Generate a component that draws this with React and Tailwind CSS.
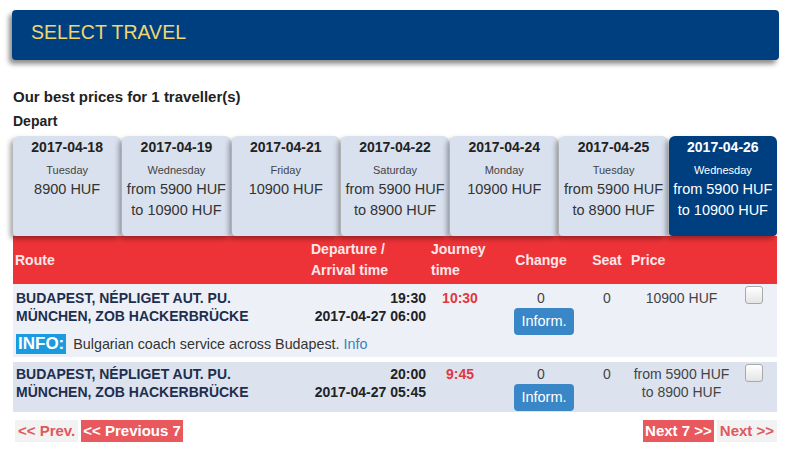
import React from 'react'

const days = [
  { date: '2017-04-18', day: 'Tuesday', price: ['8900 HUF'] },
  { date: '2017-04-19', day: 'Wednesday', price: ['from 5900 HUF', 'to 10900 HUF'] },
  { date: '2017-04-21', day: 'Friday', price: ['10900 HUF'] },
  { date: '2017-04-22', day: 'Saturday', price: ['from 5900 HUF', 'to 8900 HUF'] },
  { date: '2017-04-24', day: 'Monday', price: ['10900 HUF'] },
  { date: '2017-04-25', day: 'Tuesday', price: ['from 5900 HUF', 'to 8900 HUF'] },
  { date: '2017-04-26', day: 'Wednesday', price: ['from 5900 HUF', 'to 10900 HUF'], active: true },
]

const trips = [
  {
    dep: '19:30',
    arr: '2017-04-27 06:00',
    journey: '10:30',
    price: ['10900 HUF'],
    info: true,
    bg: 'bg-[#edf1f7]',
  },
  {
    dep: '20:00',
    arr: '2017-04-27 05:45',
    journey: '9:45',
    price: ['from 5900 HUF', 'to 8900 HUF'],
    bg: 'bg-[#dce3ee]',
  },
]

const cols = 'grid grid-cols-[292px_123px_68px_90px_42px_107px_42px]'

function Checkbox() {
  return (
    <div className="w-[18px] h-[18px] rounded-[3px] border border-[#a9a9a9] bg-gradient-to-b from-white to-[#e4e4e4]" />
  )
}

export default function App() {
  return (
    <div className="min-h-screen bg-white pl-[12px] pt-[10px] text-[#222] font-['Liberation_Sans',Arial,sans-serif]">
      {/* Header */}
      <div className="w-[767px] h-[50px] bg-[#003f7f] rounded-[4px] shadow-[-3px_4px_5px_rgba(0,0,0,0.45)] flex items-center pl-[19px] pb-[5px]">
        <h1 className="text-[19.5px] text-[#f2d66f] leading-none">SELECT TRAVEL</h1>
      </div>

      <div className="ml-[1px] w-[764px]">
        <p className="mt-[28px] text-[15px] font-bold leading-[18px]">Our best prices for 1 traveller(s)</p>
        <p className="mt-[6px] text-[14px] font-bold leading-[18px]">Depart</p>

        {/* Date tabs */}
        <div className="mt-[6px] grid grid-cols-7 gap-[1px]">
          {days.map((d) => (
            <div
              key={d.date}
              className={`h-[100px] rounded-t-[6px] rounded-b-[4px] flex flex-col items-center pt-[2px] shadow-[-3px_3px_5px_rgba(0,0,0,0.35)] ${
                d.active ? 'bg-[#003f7f] text-white' : 'bg-[#d9e1ee] text-[#333]'
              }`}
            >
              <div className={`text-[14px] font-bold leading-[18px] ${d.active ? 'text-white' : 'text-[#222]'}`}>
                {d.date}
              </div>
              <div className={`mt-[7px] mb-[2px] text-[11px] leading-[14px] ${d.active ? 'text-white' : 'text-[#444]'}`}>{d.day}</div>
              {d.price.map((p) => (
                <div key={p} className="text-[14.5px] leading-[21px] whitespace-nowrap">
                  {p}
                </div>
              ))}
            </div>
          ))}
        </div>

        {/* Table header */}
        <div className={`${cols} h-[48px] bg-[#ee3338] text-[#fde8e8] text-[14px] font-bold leading-[21px] items-center`}>
          <div className="pl-[2px]">Route</div>
          <div className="pl-[6px]">
            Departure /<br />
            Arrival time
          </div>
          <div className="pl-[3px]">
            Journey
            <br />
            time
          </div>
          <div className="text-center">Change</div>
          <div className="text-center">Seat</div>
          <div className="pl-[3px]">Price</div>
          <div />
        </div>

        {/* Rows */}
        {trips.map((t, i) => (
          <div key={i} className={`${t.bg} ${i > 0 ? 'mt-[5px]' : ''}`}>
            <div className={`${cols} h-[50px] ${i === 0 ? 'pt-[5px]' : 'pt-[3px]'} text-[14px] leading-[18px]`}>
              <div className="pl-[3px] font-bold text-[#1e2e4e]">
                BUDAPEST, NÉPLIGET AUT. PU.
                <br />
                MÜNCHEN, ZOB HACKERBRÜCKE
              </div>
              <div className="pr-[2px] text-right font-bold text-[#222]">
                {t.dep}
                <br />
                {t.arr}
              </div>
              <div className="text-center pr-[4px] font-bold text-[#e0383e]">{t.journey}</div>
              <div className="flex flex-col items-center text-[#444]">
                <div>0</div>
                <button className="mt-[1px] ml-[6px] h-[27px] px-[7px] rounded-[4px] bg-[#3a87c8] text-white text-[14.5px] leading-[27px]">
                  Inform.
                </button>
              </div>
              <div className="text-center text-[#444]">0</div>
              <div className="text-center text-[#444]">
                {t.price.map((p) => (
                  <div key={p}>{p}</div>
                ))}
              </div>
              <div className={`pl-[10px] ${i === 0 ? '-mt-[3px]' : '-mt-[1px]'}`}>
                <Checkbox />
              </div>
            </div>
            {t.info && (
              <div className="h-[23px] pl-[3px] flex items-start text-[14px]">
                <span className="bg-[#1a9be0] text-white font-bold text-[17px] leading-[20px] px-[2px]">INFO:</span>
                <span className="ml-[7px] leading-[20px] text-[14.3px] text-[#333]">
                  Bulgarian coach service across Budapest. <span className="text-[#3c7ebf]">Info</span>
                </span>
              </div>
            )}
          </div>
        ))}

        {/* Pagination */}
        <div className="mt-[8px] flex justify-between text-[15px] font-bold leading-[22px]">
          <div className="flex gap-[3px] pl-[2px]">
            <span className="bg-[#f2f2f2] text-[#e0575c] px-[3px]">&lt;&lt; Prev.</span>
            <span className="bg-[#e8585d] text-white px-[2px]">&lt;&lt; Previous 7</span>
          </div>
          <div className="flex gap-[3px]">
            <span className="bg-[#e8585d] text-white px-[2px]">Next 7 &gt;&gt;</span>
            <span className="bg-[#f2f2f2] text-[#e0575c] px-[3px]">Next &gt;&gt;</span>
          </div>
        </div>
      </div>
    </div>
  )
}
